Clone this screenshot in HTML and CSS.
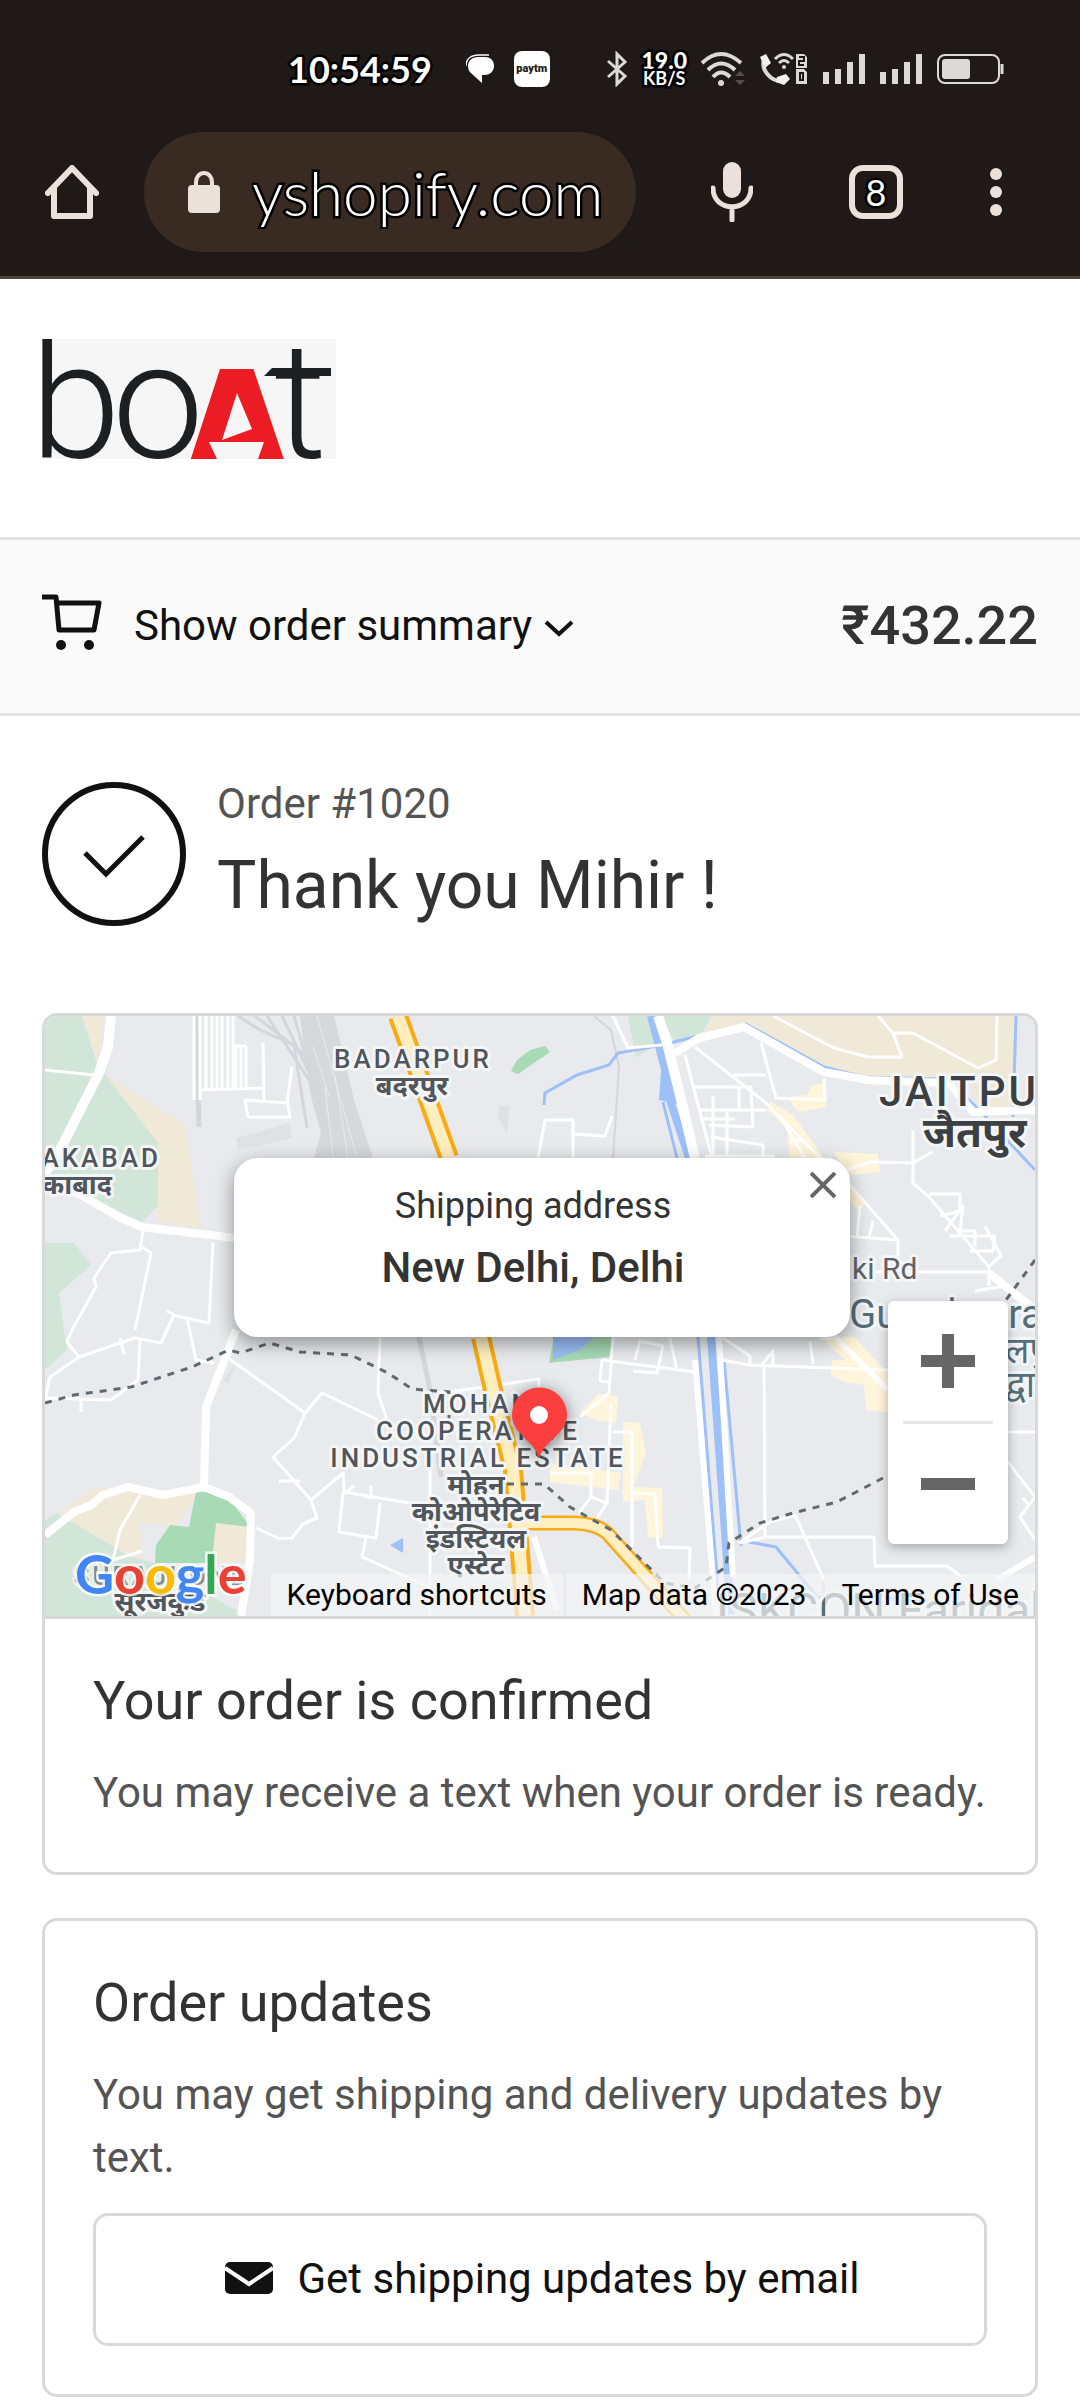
FILE: index.html
```html
<!DOCTYPE html>
<html lang="en">
<head>
    <meta charset="UTF-8">
    <meta name="viewport" content="width=device-width, initial-scale=1.0">
    <title>Thank you - boAt</title>
    <link rel="stylesheet" href="styles.css">
</head>
<body>
    <header class="browser">
        <div class="status-bar">
            <time class="clock">10:54:59</time>
            <div class="notifications">
                <svg width="28" height="30" viewBox="0 0 28 30"><path d="M0 12C0 4 6 1 13 1H23" fill="none" stroke="#fff" stroke-width="1.5"/><path d="M12 3H19C25 3 28 7 28 12S24 21 19 21H16V29L6 20C3 18 2 15 2 12C2 7 6 3 12 3Z" fill="#fff"/></svg>
                <span class="paytm">paytm</span>
            </div>
            <div class="indicators">
                <svg width="22" height="36" viewBox="0 0 22 36"><path d="M2 10L19 25L11 33V3L19 11L2 26" fill="none" stroke="#dcdad8" stroke-width="3"/></svg>
                <div class="speed"><b>19.0</b><span>KB/S</span></div>
                <svg width="44" height="36" viewBox="0 0 44 36"><g fill="none" stroke="#dcdad8" stroke-width="4"><path d="M1 12Q20-6 40 12"/><path d="M7 19Q20 6 34 19"/><path d="M12 26Q20 17 29 26"/></g><circle cx="20" cy="32" r="3" fill="#dcdad8"/><path d="M34 25L39 20L44 25ZM34 29H44L39 34Z" fill="#55504d"/></svg>
                <svg width="50" height="36" viewBox="0 0 50 36"><path d="M6 6C0 18 12 32 26 30" fill="none" stroke="#dcdad8" stroke-width="4"/><path d="M1 6L7 3L12 12L6 17ZM18 26L27 23L31 28L25 34L17 31Z" fill="#f2f1f0"/><g fill="none" stroke="#dcdad8" stroke-width="3"><path d="M16 8Q25-1 34 8"/><path d="M20 12Q25 7 30 12"/></g><circle cx="25" cy="16" r="2" fill="#dcdad8"/><path d="M37 3H45L48 6V17H37ZM37 18H45L48 21V33H37Z" fill="#dcdad8"/><path d="M40 6H45V10H40V14H45M41 22H44V29H41Z" fill="none" stroke="#1f1a17" stroke-width="2"/></svg>
                <svg width="43" height="36" viewBox="0 0 43 36"><path d="M3 21V33M15 18V33M27 11V33M39 3V33" class="bars"/></svg>
                <svg width="43" height="36" viewBox="0 0 43 36"><path d="M3 21V33M15 18V33M27 11V33M39 3V33" class="bars"/></svg>
                <svg width="67" height="30" viewBox="0 0 67 30"><rect x="1" y="1" width="61" height="28" rx="7" fill="none" stroke="#dcdad8" stroke-width="2"/><rect x="5" y="5" width="28" height="20" rx="3" fill="#dcdad8"/><path d="M65 10V20" stroke="#dcdad8" stroke-width="3"/></svg>
            </div>
        </div>
        <div class="toolbar">
            <button class="home" aria-label="Home">
                <svg width="54" height="54" viewBox="0 0 54 54"><path d="M3 28L27 3L51 28M9 23V51H45V23" fill="none" stroke="#ebe0da" stroke-width="6" stroke-linecap="round" stroke-linejoin="round"/></svg>
            </button>
            <div class="address">
                <svg width="32" height="42" viewBox="0 0 32 42"><path d="M8 17V11A8 9 0 0 1 24 11V17" fill="none" stroke="#ebe0da" stroke-width="4"/><rect y="14" width="32" height="28" rx="4" fill="#ebe0da"/></svg>
                <input type="text" aria-label="Address" value="yshopify.com">
            </div>
            <div class="actions">
                <button class="mic" aria-label="Voice search">
                    <svg width="42" height="60" viewBox="0 0 42 60"><rect x="12" width="18" height="36" rx="9" fill="#ebe0da"/><path d="M2 26C2 51 40 51 40 26M21 46V58" fill="none" stroke="#ebe0da" stroke-width="5" stroke-linecap="round"/></svg>
                </button>
                <button class="tabs" aria-label="Open tabs"><span>8</span></button>
                <button class="more" aria-label="Menu">
                    <svg width="12" height="48" viewBox="0 0 12 48" fill="#ebe0da"><circle cx="6" cy="6" r="6"/><circle cx="6" cy="24" r="6"/><circle cx="6" cy="42" r="6"/></svg>
                </button>
            </div>
        </div>
    </header>

    <div class="store">
        <a href="#" aria-label="boAt">
            <svg class="logo" width="294" height="120" viewBox="0 0 294 120">
                <rect width="294" height="120" fill="#f6f6f6"/>
                <g class="logo-thin"><text x="-12" y="118">b</text><text x="70" y="118">o</text><text x="232" y="118">t</text></g>
                <path d="M222 37L230 29H289V37Z" fill="#1c2022"/>
                <text class="logo-bold" x="146" y="120">A</text>
                <!-- sail and hull -->
                <path d="M190 44H200L222 108H168Z" fill="#ec1c24"/>
                <path d="M195 54L210 90L180 101ZM167 103H222L216 120H175Z" fill="#f6f6f6"/>
            </svg>
        </a>
    </div>

    <div class="summary">
        <button class="summary-toggle">
            <svg class="cart" width="60" height="57" viewBox="0 0 60 57"><path d="M0 3H14L17 36H52L57 9H15" fill="none" stroke="#111" stroke-width="5" stroke-linejoin="round"/><circle cx="19" cy="51" r="5" fill="#111"/><circle cx="47" cy="51" r="5" fill="#111"/></svg>
            <span>Show order summary</span>
            <svg class="chevron" width="30" height="18" viewBox="0 0 30 18"><path d="M2 3L15 15L28 3" fill="none" stroke="#111" stroke-width="4"/></svg>
        </button>
        <span class="total">₹432.22</span>
    </div>

    <main>
        <div class="thanks">
            <svg width="144" height="144" viewBox="0 0 144 144" fill="none" stroke="#111"><circle cx="72" cy="72" r="69" stroke-width="6"/><path d="M43 71L64 92L101 55" stroke-width="5"/></svg>
            <div>
                <p>Order #1020</p>
                <h1>Thank you Mihir !</h1>
            </div>
        </div>

        <section class="card">
            <div class="map">
                <svg class="map-tiles" viewBox="0 0 990 600" preserveAspectRatio="xMidYMid slice">
                    <rect width="990" height="600" fill="#e8eaed"/>
                    <!-- parks and fields -->
                    <g fill="#d1e6d9">
                        <path d="M0 0H37L53 51L61 59L113 127V190L97 206L36 177L0 170ZM0 227H29L46 249L14 277L19 314L22 334L0 354ZM0 504L12 497L86 541L110 547L200 600H0Z"/>
                        <path d="M583 0H606L617 27L591 41ZM617 0H667L654 22L630 26Z"/>
                    </g>
                    <path fill="#f0e9d8" d="M37 0H58L54 49ZM61 59L140 109L156 212L113 206V127ZM12 497L49 472L154 476L130 511L95 507L97 541H86ZM171 507L203 511L201 544L167 547ZM667 0H971L968 91L934 94L924 64L819 61L779 51L701 9L657 21Z"/>
                    <path fill="#a8dab5" d="M472 44L485 34L500 30L505 36L473 58L466 55ZM151 476H164L188 487L205 511L171 507L167 547H110L111 529L125 509L144 511ZM509 321H568L564 341L504 347Z"/>
                    <path fill="#fef5da" d="M742 81L762 79L766 70L780 67L782 91L753 96ZM726 86L748 99L779 142H745L742 112L721 94ZM789 136L833 138L835 156L802 159ZM802 165L822 185L815 195L800 182ZM535 397L554 377L573 381L571 407L552 404ZM578 406L595 407L601 437L588 471L617 472L618 522L603 521L600 484L578 486ZM505 447L576 457L573 474L505 466ZM775 321H809L843 357V396L821 394L819 369L799 366L786 359L787 344H800Z"/>
                    <path fill="#dfe1e4" d="M191 122L245 107L247 122L193 134ZM454 90H465L462 118L453 102ZM183 368L192 345L178 364Z"/>

                    <!-- railways -->
                    <path fill="#d6d9dc" d="M255 0H289L309 84L328 142H269L276 117L265 77L262 55Z"/>
                    <g fill="none" stroke="#d3d6da">
                        <path stroke-width="5" d="M151 0L154 111M374 321L385 374L396 461"/>
                        <path stroke-width="3" d="M193 0L215 14L249 29L262 112M210 0L262 40M222 0L268 70M237 0L280 90M249 0L290 142M249 29L276 60"/>
                        <path stroke-width="2" d="M549 0L566 14L574 51L568 142"/>
                    </g>
                    <path d="M268 30L284 80M272 0L312 142M280 70L288 142M290 60L303 142" fill="none" stroke="#e8eaed" stroke-width="1"/>

                    <!-- water -->
                    <g fill="none" stroke="#9dc0f9">
                        <path stroke-width="3" d="M499 89L500 77L532 59L564 49L573 37L617 29L701 8L779 51L819 61L894 63M618 86L632 142M653 321L672 560L674 600M971 0L968 101M907 67L941 101L990 154M704 526L731 531L772 581L857 582L920 590M679 344L696 530"/>
                        <path stroke-width="8" d="M606 0L622 61L625 84L644 142M666 321L686 600"/>
                    </g>
                    <path fill="#9dc0f9" d="M345 529L358 522V537ZM508 321H549L535 334L508 344Z"/>
                    <path fill="#9dc0f9" d="M616 55L627 58L632 88L614 84Z"/>

                    <!-- small streets -->
                    <g class="street">
                        <path d="M0 54L49 59M149 0V84M155 0V84M161 0V73M167 0V73M172 0V73M177 0V73M183 0V73M188 0V73M188 30H201M191 30V73M196 30V73M201 30V73M154 74L218 72M218 27L219 86M247 51L242 87L200 84L203 101H245L242 84"/>
                        <path d="M98 214L95 234L66 237L49 262L51 271L27 314L22 326L34 341L90 322L116 327L129 299L122 295M97 231L106 237L90 314M168 226L164 307L127 299M34 341L5 361L0 384M95 324L93 364L66 384L0 382M142 302L151 344L169 347M36 382V396M75 322L79 338"/>
                        <path d="M183 342L260 397L277 377L333 404M260 397L249 422L228 441L266 484L272 502L258 508L247 522L235 523L211 512M266 484L298 457L299 476L364 487M298 477L294 516L331 522L335 487M321 522L317 541L384 571M335 321L333 377L342 404M385 454V600M95 479L75 514L68 544L97 535M234 465H255M309 470L299 478M320 480L326 482V470M404 376L494 363V380"/>
                        <path d="M568 0L583 32L617 29M728 0L789 32L823 41H857L848 17L833 0M848 17H868L933 52L951 44L952 0M650 31L721 87L775 142M800 164L853 224V240M640 39L667 142M688 59H721M716 27L731 82L780 84L779 62M650 71H706L708 111L664 109M655 94H721M666 121L718 129V142M668 80V142M682 94V140M655 103H690M694 72V95M660 140H730"/>
                        <path d="M493 142L500 104L528 104V142M528 118L560 120L567 100M802 154L826 146L868 147L887 136M868 114V167L884 181L944 251M819 256H944M800 220L853 224M824 222L828 205M815 190L812 222M884 178H915V195L895 200M900 215L918 190L915 215H930V230M905 220H950L948 235H925M940 210L956 240L944 250V270M930 275L960 270"/>
                        <path d="M568 321L564 377L535 401M557 344L555 365L564 366M566 387L562 487L552 502M568 416H587V531M505 457H546V481L562 487M546 481L534 497M588 477L610 478L613 531L645 532L644 564M557 344L650 356M590 344L595 325L618 330L612 357L588 355M625 322L632 355M677 344L704 349L843 354M678 322L705 340V350M719 349L720 521M716 350L728 335V350M765 325L768 348M694 527L721 521H829L830 550H902L917 561L925 575M694 527L725 506L750 499L779 564M963 416H990M963 446L990 481L975 501L990 524M978 482L985 490M735 100L760 142M745 125L757 124"/>
                    </g>

                    <!-- roads -->
                    <g class="road">
                        <path stroke-width="10" d="M66 0L63 31L54 57L15 134L0 157M613 0L622 27L633 71L650 142"/>
                        <path stroke-width="8" d="M0 160L36 179L76 202L97 211L190 222M191 314L161 391L159 471L118 479L83 471L58 479L46 489L29 496L0 519M159 471L184 481L206 497L205 544L196 600M630 37L654 22L699 11L779 56L823 64L904 67L928 96L990 94M944 257L990 294"/>
                        <path stroke-width="6" d="M674 321L688 561M650 344L671 600M489 521L512 594M951 564L990 541M775 321H790L843 374"/>
                    </g>

                    <!-- highways -->
                    <g fill="none" stroke="#f9ab15"><path stroke-width="20" d="M353 0L404 142M436 321L448 374L468 454L475 537L480 600"/><path stroke-width="15" d="M470 507H530Q552 508 562 517L640 604"/></g>
                    <g fill="none" stroke="#feeec0"><path stroke-width="12" d="M353 0L404 142M436 321L448 374L468 454L475 537L480 600"/><path stroke-width="10" d="M470 507H530Q552 508 562 517L640 604"/></g>

                    <path class="metro" d="M0 387L29 379L86 371L147 351L184 334L195 337L225 327L255 336L306 339L343 357L367 373L404 376V424M462 468H499L525 491L566 514L620 567L650 572L681 551L684 527L715 507L748 497L792 486L838 462M990 244L961 284"/>

                    <g class="label">
                        <text x="368" y="52">BADARPUR</text>
                        <text x="367" y="79" class="hindi">बदरपुर</text>
                        <text x="116" y="151" class="end">AKABAD</text>
                        <text x="67" y="178" class="hindi end">काबाद</text>
                        <text x="433" y="397">MOHAN</text>
                        <text x="433" y="424">COOPERATIVE</text>
                        <text x="433" y="451">INDUSTRIAL ESTATE</text>
                        <text x="431" y="478" class="hindi">मोहन</text>
                        <text x="431" y="505" class="hindi">कोओपेरेटिव</text>
                        <text x="431" y="532" class="hindi">इंडस्टियल</text>
                        <text x="431" y="559" class="hindi">एस्टेट</text>
                        <text x="117" y="569" class="faded">SURAJKUND</text>
                        <text x="115" y="595" class="hindi">सूरजकुंड</text>
                    </g>
                    <g class="label town">
                        <text x="834" y="90">JAITPUR</text>
                        <text x="878" y="131" class="hindi">जैतपुर</text>
                    </g>
                    <g class="label place">
                        <text x="807" y="263" class="street-name">ki Rd</text>
                        <text x="804" y="312">Gurudwara</text>
                        <text x="960" y="347" class="place-hindi">लपुर</text>
                        <text x="960" y="381" class="place-hindi">द्वारा</text>
                        <text x="671" y="611" class="station">ISKCON Faridabad</text>
                    </g>
                </svg>

                <svg class="pin" width="55" height="70" viewBox="0 0 55 70"><path d="M27 70C22 52 0 46 0 27A27 27 0 0 1 55 27C55 46 33 52 27 70Z" fill="#fb3e3e"/><circle cx="27" cy="27" r="9" fill="#fff"/></svg>

                <div class="popup">
                    <p>Shipping address</p>
                    <strong>New Delhi, Delhi</strong>
                    <button class="close" aria-label="Close">
                        <svg width="26" height="26" viewBox="0 0 26 26"><path d="M1 1L25 25M25 1L1 25" stroke="#666" stroke-width="4"/></svg>
                    </button>
                </div>

                <div class="zoom">
                    <button aria-label="Zoom in"><svg width="54" height="54" viewBox="0 0 54 54"><path d="M0 27H54M27 0V54" stroke="#666" stroke-width="12"/></svg></button>
                    <button aria-label="Zoom out"><svg width="54" height="54" viewBox="0 0 54 54"><path d="M0 27H54" stroke="#666" stroke-width="12"/></svg></button>
                </div>

                <a class="google" href="#" aria-label="Google"><span class="blue">G</span><span class="red">o</span><span class="yellow">o</span><span class="blue">g</span><span class="green">l</span><span class="red">e</span></a>
                <div class="attribution">
                    <button>Keyboard shortcuts</button>
                    <span>Map data ©2023</span>
                    <a href="#">Terms of Use</a>
                </div>
            </div>
            <div class="card-body">
                <h2>Your order is confirmed</h2>
                <p>You may receive a text when your order is ready.</p>
            </div>
        </section>

        <section class="card">
            <div class="card-body">
                <h2>Order updates</h2>
                <p>You may get shipping and delivery updates by text.</p>
                <button class="email">
                    <svg width="48" height="32" viewBox="0 0 48 32"><rect width="48" height="32" rx="5" fill="#111"/><path d="M0 6L24 22L48 6" fill="none" stroke="#fff" stroke-width="4"/></svg>
                    Get shipping updates by email
                </button>
            </div>
        </section>
    </main>
</body>
</html>
```
FILE: styles.css
```css
* {
    box-sizing: border-box;
}
body {
    margin: 0;
    font-family: Roboto, "Noto Sans", sans-serif;
    font-size: 42px;
    line-height: 63px;
    color: #333;
    background: #fff;
}
h1, h2, p {
    margin: 0;
    font-weight: 400;
}
button {
    margin: 0;
    padding: 0;
    border: 0;
    background: none;
    font: inherit;
    color: inherit;
}
a {
    color: inherit;
    text-decoration: none;
}
svg {
    display: block;
    flex: none;
}

/* phone status bar and browser toolbar */
.browser {
    background: #1f1a17;
    border-bottom: 3px solid #4f4039;
    color: #fff;
}
.status-bar {
    display: flex;
    align-items: center;
    padding: 45px 76px 39px 288px;
    height: 132px;
}
.clock,
.speed,
.tabs span,
.address input {
    -webkit-text-stroke: 5px #000;
    paint-order: stroke fill;
}
.clock {
    font-family: Lato, sans-serif;
    font-size: 36px;
    line-height: 48px;
    font-weight: 700;
}
.notifications {
    display: flex;
    align-items: center;
    gap: 20px;
    margin-left: 34px;
}
.paytm {
    width: 36px;
    border-radius: 8px;
    background: #fff;
    color: #1f1a17;
    font-size: 11px;
    font-weight: 900;
    line-height: 36px;
    text-align: center;
}
.indicators {
    display: flex;
    align-items: center;
    gap: 14px;
    margin-left: auto;
}
.speed {
    display: flex;
    flex-direction: column;
    align-items: center;
    font-family: Lato, sans-serif;
    font-size: 18px;
    font-weight: 700;
    line-height: 18px;
}
.speed b {
    font-size: 23px;
}
.bars {
    fill: none;
    stroke: #dcdad8;
    stroke-width: 6;
}
.toolbar {
    display: flex;
    align-items: center;
    padding: 0 36px 24px 42px;
}
.home {
    display: flex;
    justify-content: center;
    width: 60px;
}
.address {
    display: flex;
    flex: 1;
    align-items: center;
    gap: 32px;
    min-width: 0;
    height: 120px;
    margin: 0 24px 0 42px;
    padding: 0 22px 0 44px;
    border-radius: 60px;
    background: #3a2b22;
}
.address input {
    flex: 1;
    min-width: 0;
    padding: 0;
    border: 0;
    background: none;
    font: 300 62px Lato, sans-serif;
    color: #fff;
}
.actions {
    display: flex;
}
.actions button {
    display: flex;
    align-items: center;
    justify-content: center;
    width: 144px;
}
.actions .more {
    width: 96px;
}
.tabs span {
    width: 54px;
    border: 6px solid #ebe0da;
    border-radius: 14px;
    font: 400 36px/42px Lato, sans-serif;
}

/* store header */
.store {
    padding: 60px 42px 78px;
}
.store a {
    display: inline-block;
    vertical-align: top;
}
.logo-thin {
    font-family: Roboto, sans-serif;
    font-size: 164px;
    font-weight: 300;
    fill: #1c2022;
}
.logo-bold {
    font-family: Inter, sans-serif;
    font-size: 124px;
    font-weight: 900;
    fill: #ec1c24;
}
.summary {
    display: flex;
    align-items: center;
    justify-content: space-between;
    height: 179px;
    padding: 0 42px 3px;
    border: solid #e4e4e4;
    border-width: 3px 0;
    background: #fafafa;
}
.summary-toggle {
    display: flex;
    align-items: center;
    color: #111;
}
.summary-toggle span {
    margin: 0 12px 0 32px;
}
.cart {
    align-self: flex-start;
}
.chevron {
    margin-top: 6px;
}
.total {
    font-size: 54px;
    font-weight: 500;
}

main {
    padding: 56px 42px 0;
}
.thanks {
    display: flex;
    align-items: center;
    gap: 31px;
    margin-bottom: 77px;
}
.thanks p {
    color: #545454;
}
.thanks h1 {
    font-size: 66px;
    line-height: 101px;
}

.card {
    margin-bottom: 43px;
    border: 3px solid #d9d9d9;
    border-radius: 15px;
    overflow: hidden;
}
.card-body {
    padding: 48px;
}
.card-body h2 {
    margin-bottom: 26px;
    font-size: 54px;
    line-height: 68px;
}
.card-body p {
    color: #545454;
}
.email {
    display: flex;
    align-items: center;
    justify-content: center;
    gap: 24px;
    width: 100%;
    height: 133px;
    margin-top: 24px;
    padding: 0 0 3px 5px;
    border: 3px solid #d9d9d9;
    border-radius: 15px;
    color: #111;
}

/* map */
.map {
    position: relative;
    height: 603px;
    border-bottom: 3px solid #d9d9d9;
    overflow: hidden;
}
.map-tiles {
    width: 100%;
    height: 600px;
}
.street,
.road {
    fill: none;
    stroke: #fff;
    stroke-linejoin: round;
}
.street {
    stroke-width: 3;
}
.metro {
    fill: none;
    stroke: #5f6b70;
    stroke-width: 3;
    stroke-dasharray: 7 7;
}
.label {
    font-size: 26px;
    font-weight: 500;
    letter-spacing: 3px;
    text-anchor: middle;
    fill: #50565b;
    stroke: #f4f5f6;
    stroke-width: 6px;
    stroke-linejoin: round;
    paint-order: stroke fill;
}
.label .hindi {
    font-size: 27px;
    font-weight: 700;
    letter-spacing: 0;
}
.label .end {
    text-anchor: end;
}
.label .faded {
    opacity: 0.6;
}
.town {
    font-size: 42px;
    text-anchor: start;
    fill: #3c4043;
}
.town .hindi {
    font-size: 42px;
}
.place {
    font-size: 40px;
    font-weight: 400;
    letter-spacing: 0;
    text-anchor: start;
    fill: #546e7a;
}
.place .street-name {
    font-size: 30px;
    fill: #5f6368;
}
.place-hindi {
    font-size: 36px;
}
.station {
    font-size: 48px;
}
.pin {
    position: absolute;
    top: 372px;
    left: calc(50% - 28px);
    overflow: visible;
    filter: drop-shadow(0 3px 8px rgba(0, 0, 0, 0.5));
}
.popup {
    position: absolute;
    top: 142px;
    left: 50%;
    width: 616px;
    padding: 17px 38px 38px 20px;
    margin-left: -306px;
    border-radius: 24px;
    background: #fff;
    box-shadow: 0 6px 20px rgba(0, 0, 0, 0.4);
    text-align: center;
    line-height: 62px;
}
.popup p {
    font-size: 36px;
}
.popup strong {
    display: block;
    font-weight: 500;
}
.close {
    position: absolute;
    top: 14px;
    right: 14px;
}
.zoom {
    position: absolute;
    top: 285px;
    right: 27px;
    width: 120px;
    padding: 0 15px;
    border-radius: 6px;
    background: #fff;
    box-shadow: 0 3px 12px rgba(0, 0, 0, 0.3);
}
.zoom button {
    display: flex;
    align-items: center;
    justify-content: center;
    width: 90px;
    height: 120px;
}
.zoom button + button {
    height: 123px;
    border-top: 3px solid #e6e6e6;
}
.google {
    position: absolute;
    bottom: 3px;
    left: 30px;
    font: 700 54px/78px Lato, sans-serif;
    -webkit-text-stroke: 5px rgba(255, 255, 255, 0.8);
    paint-order: stroke fill;
}
.blue { color: #4285f4; }
.red { color: #e94235; }
.yellow { color: #fabb05; }
.green { color: #34a853; }
.attribution {
    position: absolute;
    right: 0;
    bottom: 0;
    display: flex;
    gap: 3px;
    font-size: 30px;
    line-height: 42px;
    color: #000;
}
.attribution > * {
    padding: 0 16px;
    background: rgba(245, 245, 245, 0.7);
}
```
